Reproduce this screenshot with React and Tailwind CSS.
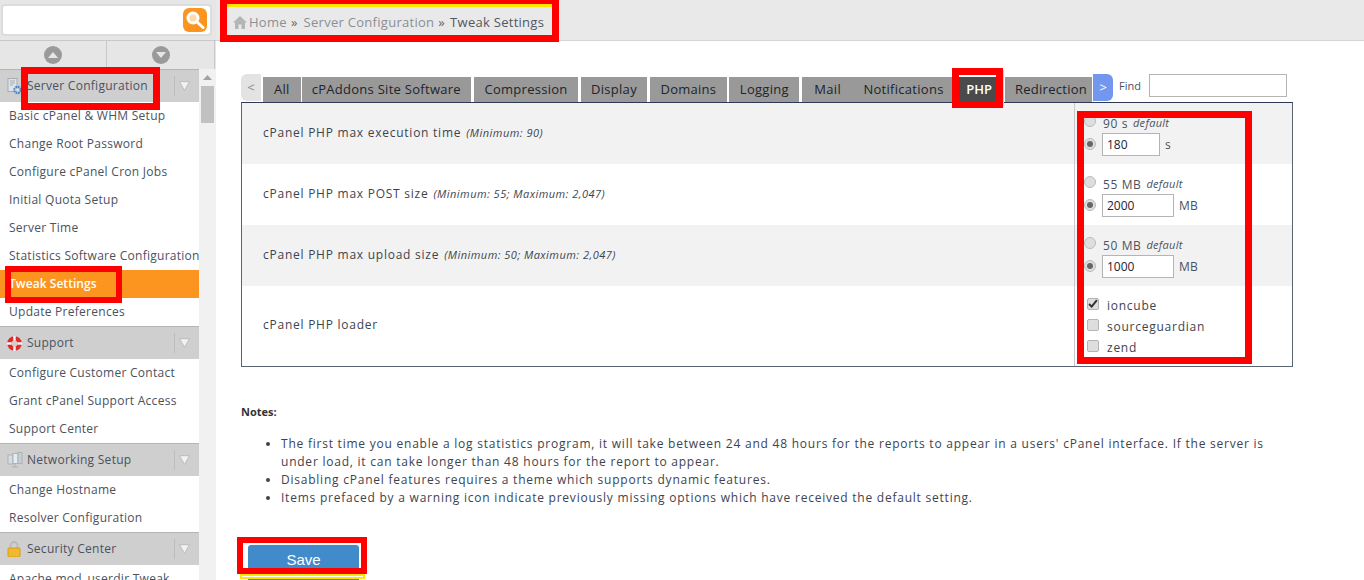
import React from "react";

const font = { fontFamily: '"Open Sans", sans-serif' };

const HomeIcon = () => (
  <svg width="14" height="13" viewBox="0 0 14 13" fill="#b5b5b5">
    <path d="M7 0 L14 6.5 L12 6.5 L12 13 L8.5 13 L8.5 8.5 L5.5 8.5 L5.5 13 L2 13 L2 6.5 L0 6.5 Z" />
  </svg>
);

const SearchIcon = () => (
  <svg width="20" height="20" viewBox="0 0 20 20" fill="none" stroke="#fff">
    <circle cx="8" cy="8" r="5" strokeWidth="3" fill="#fdd9ae" />
    <path d="M12 12 L18 17.5" strokeWidth="3" strokeLinecap="round" />
  </svg>
);

const ConfigIcon = () => (
  <svg width="15" height="17" viewBox="0 0 15 17">
    <rect x="1" y="0.5" width="9" height="13" fill="#dfe3e6" stroke="#a4adb5" />
    <path d="M3 3h5M3 5h5M3 7h3" stroke="#a4adb5" />
    <circle cx="10.5" cy="12" r="3.2" fill="none" stroke="#4a86c8" strokeWidth="2" strokeDasharray="1.8 0.7" />
    <circle cx="10.5" cy="12" r="1.2" fill="#dfe5ea" />
  </svg>
);

const SupportIcon = () => (
  <svg width="15" height="15" viewBox="0 0 16 16">
    <circle cx="8" cy="8" r="5.5" fill="none" stroke="#de2b2b" strokeWidth="4.5" />
    <path d="M8 0v5M8 11v5M0 8h5M11 8h5" stroke="#f4f4f4" strokeWidth="2.6" />
  </svg>
);

const NetworkIcon = () => (
  <svg width="16" height="16" viewBox="0 0 16 16">
    <rect x="1" y="3" width="5" height="9" fill="#d6dce0" stroke="#aab3ba" />
    <rect x="6" y="1.5" width="5" height="10" fill="#e8ecef" stroke="#aab3ba" />
    <rect x="11" y="0.5" width="4" height="11" fill="#c6ced4" stroke="#aab3ba" />
    <path d="M8 12v3M5 15h6" stroke="#aab3ba" />
  </svg>
);

const LockIcon = () => (
  <svg width="14" height="16" viewBox="0 0 14 16">
    <path d="M3.5 7V4.5a3.5 3.5 0 0 1 7 0V7" fill="none" stroke="#b9b9b9" strokeWidth="1.8" />
    <rect x="1" y="7" width="12" height="9" rx="1" fill="#f2b92e" stroke="#d99a17" />
  </svg>
);

const ArrowButton = ({ up }) => (
  <div className="flex-1 flex items-center justify-center">
    <div className="w-[18px] h-[18px] rounded-full bg-[#9a9a9a] flex items-center justify-center">
      <svg width="10" height="6" viewBox="0 0 10 6" fill="#e6e6e6">
        <path d={up ? "M5 0 L10 6 L0 6 Z" : "M0 0 L10 0 L5 6 Z"} />
      </svg>
    </div>
  </div>
);

const SideHeader = ({ icon, children }) => (
  <div className="h-[33px] bg-[#cfcfcf] border-t border-[#b4b4b4] flex items-center pl-[7px] text-[12px] text-[#4a5260] tracking-[0.27px] shrink-0">
    <div className="w-[20px] flex items-center shrink-0">{icon}</div>
    <span className="flex-1 whitespace-nowrap">{children}</span>
    <div className="w-[25px] h-[20px] pr-[5px] border-l border-[#bcbcbc] flex items-center justify-center shrink-0">
      <svg width="11" height="10" viewBox="0 0 9 8" fill="#f2f2f2" stroke="#a9a9a9" strokeWidth="0.5">
        <path d="M0.5 0.5 L8.5 0.5 L4.5 7.5 Z" />
      </svg>
    </div>
  </div>
);

const SideItem = ({ active, children }) => (
  <div
    className={
      "h-[28px] pl-[9px] flex items-center text-[12px] whitespace-nowrap shrink-0 " +
      (active ? "bg-[#fb951f] text-white font-semibold tracking-[0.05px]" : "bg-white text-[#4a5260] tracking-[0.27px]")
    }
  >
    {children}
  </div>
);

const Sidebar = () => (
  <aside className="w-[216px] shrink-0 flex flex-col h-full bg-[#f1f1f1] overflow-hidden">
    <div className="h-[41px] bg-[#e6e6e6] border-b border-[#c8c8c8] flex items-center pl-[1px] shrink-0">
      <div className="w-[211px] h-[32px] bg-white border-2 border-[#dcdcdc] rounded flex items-center justify-end pr-[3px]">
        <div className="w-[24px] h-[24px] bg-[#fb951f] rounded-md flex items-center justify-center">
          <SearchIcon />
        </div>
      </div>
    </div>
    <div className="h-[28px] bg-[#e6e6e6] flex shrink-0">
      <div className="w-[107px] border-r border-[#c8c8c8] flex">
        <ArrowButton up />
      </div>
      <div className="w-[108px] border-r border-[#c8c8c8] flex">
        <ArrowButton />
      </div>
    </div>
    <div className="flex flex-1 min-h-0">
      <div className="w-[199px] shrink-0 overflow-hidden">
        <SideHeader icon={<ConfigIcon />}>Server Configuration</SideHeader>
        <SideItem>Basic cPanel &amp; WHM Setup</SideItem>
        <SideItem>Change Root Password</SideItem>
        <SideItem>Configure cPanel Cron Jobs</SideItem>
        <SideItem>Initial Quota Setup</SideItem>
        <SideItem>Server Time</SideItem>
        <SideItem>Statistics Software Configuration</SideItem>
        <SideItem active>Tweak Settings</SideItem>
        <SideItem>Update Preferences</SideItem>
        <SideHeader icon={<SupportIcon />}>Support</SideHeader>
        <SideItem>Configure Customer Contact</SideItem>
        <SideItem>Grant cPanel Support Access</SideItem>
        <SideItem>Support Center</SideItem>
        <SideHeader icon={<NetworkIcon />}>Networking Setup</SideHeader>
        <SideItem>Change Hostname</SideItem>
        <SideItem>Resolver Configuration</SideItem>
        <SideHeader icon={<LockIcon />}>Security Center</SideHeader>
        <SideItem>Apache mod_userdir Tweak</SideItem>
      </div>
      <div className="flex-1 flex flex-col items-center pt-[6px] gap-[6px]">
        <svg width="9" height="5" viewBox="0 0 9 5" fill="#a3a3a3">
          <path d="M4.5 0 L9 5 L0 5 Z" />
        </svg>
        <div className="w-[13px] h-[37px] bg-[#c1c1c1]" />
      </div>
    </div>
  </aside>
);

const tabs = [
  { name: "All", cls: "px-[11px] mr-[1px]" },
  { name: "cPAddons Site Software", cls: "px-[10px] mr-[3px]" },
  { name: "Compression", cls: "px-[10.5px] mr-[2.5px]" },
  { name: "Display", cls: "px-[10.5px] mr-[2.5px]" },
  { name: "Domains", cls: "px-[10.5px] mr-[2.5px]" },
  { name: "Logging", cls: "px-[10.5px] mr-[2.5px]" },
  { name: "Mail", cls: "px-[12.5px]" },
  { name: "Notifications", cls: "px-[10px] mr-[2.5px]" },
  { name: "PHP", cls: "ml-[2px] px-[8px] mr-[5px]", dark: true },
  { name: "Redirection", cls: "pl-[10px] pr-[5px] mr-[1px]" },
];

const TabBar = () => (
  <div className="flex items-end h-[28px] relative">
    <div className="w-[20px] h-[27px] mr-[2px] mb-[1px] bg-[#e3e3e3] rounded-l-md text-[#8a8a8a] text-[13px] flex items-center justify-center">
      &lt;
    </div>
    {tabs.map((t) => (
      <div
        key={t.name}
        className={
          "h-[25px] flex items-center text-[13px] whitespace-nowrap " +
          t.cls +
          " " +
          (t.dark ? "bg-[#4a4a4a] text-white font-semibold" : "bg-[#999999] text-[#20242c] tracking-[0.28px]")
        }
      >
        {t.name}
      </div>
    ))}
    <div className="w-[20px] h-[27px] mb-[1px] bg-[#7396ef] rounded-r-md text-white text-[13px] flex items-center justify-center">
      &gt;
    </div>
    <span className="ml-[6px] mb-[8px] text-[11px] text-[#4a5260]">Find</span>
    <div className="ml-[8px] mb-[5px] w-[138px] h-[23px] border border-[#b4b4b4] bg-white" />
  </div>
);

const Radio = ({ checked }) => (
  <span className="w-[12px] h-[12px] rounded-full bg-[#dedede] border border-[#bbbbbb] flex items-center justify-center shrink-0">
    {checked && <span className="w-[6px] h-[6px] rounded-full bg-[#666]" />}
  </span>
);

const Check = ({ checked }) => (
  <span className="w-[12px] h-[12px] rounded-[2px] bg-[#dedede] border border-[#b4b4b4] flex items-center justify-center shrink-0 relative -top-[2px]">
    {checked && (
      <svg width="10" height="9" viewBox="0 0 9 8" fill="none" stroke="#333" strokeWidth="1.8">
        <path d="M1 4.5 L3.3 6.8 L8 1" />
      </svg>
    )}
  </span>
);

const NumberCell = ({ def, value, unit, width }) => (
  <div className="pl-[9px] pt-[12px] text-[#4a5260]">
    <div className="h-[16px] flex items-center">
      <span className="relative -top-[2px]"><Radio /></span>
      <span className="ml-[7px] text-[12px] tracking-[0.6px] relative top-[1px]">{def}</span>
      <span className="ml-[5px] text-[11px] italic tracking-[0.3px]">default</span>
    </div>
    <div className="h-[23px] mt-[2px] flex items-center">
      <span className="relative -top-[1px]"><Radio checked /></span>
      <input
        readOnly
        value={value}
        className={"ml-[6px] h-[23px] border border-[#b4b4b4] bg-white px-[4px] text-[12px] text-[#1d2330] " + width}
      />
      <span className="ml-[5px] text-[12px] tracking-[0.3px]">{unit}</span>
    </div>
  </div>
);

const Label = ({ title, hint }) => (
  <div className="flex-1 pl-[21px] pb-[2px] flex items-center text-[12px] tracking-[0.75px] text-[#3d4450]">
    {title}
    {hint && <span className="ml-[5px] text-[11px] italic tracking-[0.48px] relative top-[1px]">{hint}</span>}
  </div>
);

const Row = ({ alt, height, label, children }) => (
  <div className={"flex " + height + " " + (alt ? "bg-[#f2f2f2]" : "bg-white")}>
    {label}
    <div className="w-[218px] border-l border-[#c9c9c9]">{children}</div>
  </div>
);

const SettingsTable = () => (
  <div className="w-[1052px] h-[265px] border border-[#5b6472] border-t-[#2b3a55]">
    <Row alt height="h-[61px]" label={<Label title="cPanel PHP max execution time" hint="(Minimum: 90)" />}>
      <NumberCell def="90 s" value="180" unit="s" width="w-[58px]" />
    </Row>
    <Row height="h-[61px]" label={<Label title="cPanel PHP max POST size" hint="(Minimum: 55; Maximum: 2,047)" />}>
      <NumberCell def="55 MB" value="2000" unit="MB" width="w-[72px]" />
    </Row>
    <Row alt height="h-[61px]" label={<Label title="cPanel PHP max upload size" hint="(Minimum: 50; Maximum: 2,047)" />}>
      <NumberCell def="50 MB" value="1000" unit="MB" width="w-[72px]" />
    </Row>
    <Row height="h-[80px]" label={<Label title="cPanel PHP loader" />}>
      <div className="pl-[12px] pt-[9px] text-[12px] tracking-[0.75px] text-[#3d4450]">
        {[["ioncube", true], ["sourceguardian", false], ["zend", false]].map(([name, on]) => (
          <div key={name} className="h-[21px] flex items-center">
            <Check checked={on} />
            <span className="ml-[8px]">{name}</span>
          </div>
        ))}
      </div>
    </Row>
  </div>
);

const Notes = () => (
  <div className="mt-[37px] text-[#3d4450]">
    <div className="text-[11px] font-bold text-[#333]">Notes:</div>
    <ul className="mt-[14px] pl-[40px] list-disc text-[12px] leading-[18px] tracking-[0.77px] w-[1052px]">
      <li>
        The first time you enable a log statistics program, it will take between 24 and 48 hours for the reports to appear in a users' cPanel interface. If the server is under load, it can take longer than 48 hours for the report to appear.
      </li>
      <li>Disabling cPanel features requires a theme which supports dynamic features.</li>
      <li>Items prefaced by a warning icon indicate previously missing options which have received the default setting.</li>
    </ul>
  </div>
);

const Box = ({ className }) => <div className={"absolute pointer-events-none " + className} />;

export default function App() {
  return (
    <div className="relative w-[1364px] h-[580px] overflow-hidden bg-white flex" style={font}>
      <Sidebar />
      <main className="flex-1 min-w-0 flex flex-col">
        <div className="h-[41px] bg-[#e9e9e9] border-b border-[#d4d4d4] shrink-0 flex items-center pl-[17px] pt-[5px] text-[13px] tracking-[0.28px] text-[#8a8f96]">
          <HomeIcon />
          <span className="ml-[2px]">Home</span>
          <span className="ml-[4px] text-[#666]">»</span>
          <span className="ml-[6px]">Server Configuration</span>
          <span className="ml-[4px] text-[#666]">»</span>
          <span className="ml-[5px] text-[#4f5864]">Tweak Settings</span>
        </div>
        <div className="pl-[25px] pt-[33px] relative">
          <TabBar />
          <SettingsTable />
          <Notes />
          <div className="mt-[38px] ml-[7px] w-[111px] h-[40px] bg-[#428bca] rounded-t-[3px] text-white text-[15px] flex items-start justify-center pt-[4px]" style={{ fontFamily: '"Liberation Sans", sans-serif' }}>
            Save
          </div>
        </div>
      </main>

      {/* yellow highlights under the red boxes */}
      <Box className="left-[240px] top-[574px] w-[125px] h-[5px] border-2 border-[#ffe600] bg-white" />
      <Box className="left-[227px] top-[4px] w-[325px] h-[3px] bg-[#ffe600]" />
      <Box className="left-[1002px] top-[70px] w-[2px] h-[36px] bg-[#ffe600]" />

      {/* red annotation boxes */}
      <Box className="left-[21px] top-[67px] w-[139px] h-[43px] border-[7px] border-[#ff0000]" />
      <Box className="left-[5px] top-[266px] w-[117px] h-[37px] border-[6px] border-[#ff0000]" />
      <Box className="left-[220px] top-0 w-[339px] h-[42px] border-[7px] border-t-[4px] border-[#ff0000]" />
      <Box className="left-[952px] top-[68px] w-[51px] h-[40px] border-[7px] border-[#ff0000]" />
      <Box className="left-[1077px] top-[111px] w-[175px] h-[253px] border-[7px] border-[#ff0000]" />
      <Box className="left-[237px] top-[537px] w-[130px] h-[37px] border-[6px] border-[#ff0000]" />
    </div>
  );
}
